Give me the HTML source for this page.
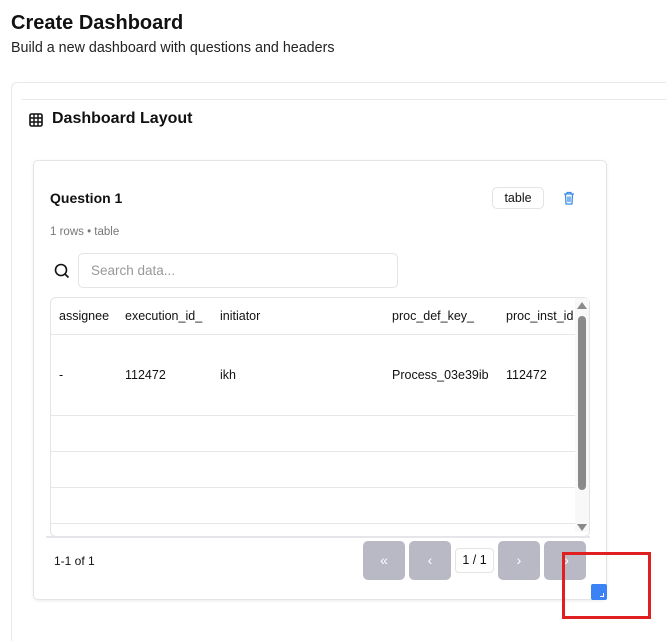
<!DOCTYPE html>
<html><head><style>
*{box-sizing:border-box;margin:0;padding:0}
html,body{width:666px;height:641px;overflow:hidden}
body{background:#fff;font-family:"Liberation Sans",sans-serif;color:#111;position:relative}
.a{position:absolute}
.th{position:absolute;top:309px;font-size:12.5px;color:#111}
.td{position:absolute;top:368px;font-size:12.5px;color:#111}
.btn{position:absolute;top:541px;width:42px;height:39px;background:#b9b9c5;border-radius:5px;color:#fff;font-size:14px;text-align:center;line-height:39px}
.rl{position:absolute;left:51px;width:524px;height:1px;background:#e6e6ea}
</style></head><body>
<div class="a" style="left:11px;top:12px;font-size:20px;font-weight:bold">Create Dashboard</div>
<div class="a" style="left:11px;top:40px;font-size:14.3px;color:#222">Build a new dashboard with questions and headers</div>
<div class="a" style="left:11px;top:82px;width:655px;height:559px;border:1px solid #e8e8ec;border-right:none;border-bottom:none;border-radius:6px 0 0 0"></div>
<div class="a" style="left:22px;top:99px;width:644px;height:1px;background:#e8e8ec"></div>
<svg class="a" style="left:29px;top:113px" width="14" height="14" viewBox="0 0 14 14"><rect x="1" y="1" width="12" height="12" rx="1.5" fill="none" stroke="#111" stroke-width="1.6"/><path d="M1 5H13M1 9H13M5 1V13M9 1V13" stroke="#111" stroke-width="1.4"/></svg>
<div class="a" style="left:52px;top:110px;font-size:16px;font-weight:bold">Dashboard Layout</div>
<div class="a" style="left:33px;top:160px;width:574px;height:440px;border:1px solid #e3e3e8;border-radius:5px;box-shadow:0 1px 3px rgba(0,0,0,.08)"></div>
<div class="a" style="left:50px;top:190px;font-size:14px;font-weight:bold">Question 1</div>
<div class="a" style="left:492px;top:187px;width:52px;height:22px;border:1px solid #e3e3e8;border-radius:5px;font-size:12.5px;text-align:center;line-height:20px">table</div>
<svg class="a" style="left:563px;top:191px" width="12" height="14" viewBox="0 0 12 14"><path d="M1 3H11M4 3V1.5H8V3M2.5 3L3 13H9L9.5 3M5 5.5V11M7 5.5V11" fill="none" stroke="#3b8ee8" stroke-width="1.3"/></svg>
<div class="a" style="left:50px;top:226px;font-size:11.5px;color:#777">1 rows • table</div>
<svg class="a" style="left:54px;top:263px" width="16" height="16" viewBox="0 0 16 16"><circle cx="7" cy="7" r="5.5" fill="none" stroke="#111" stroke-width="1.6"/><path d="M11 11L14.5 14.5" stroke="#111" stroke-width="1.6"/></svg>
<div class="a" style="left:78px;top:253px;width:320px;height:35px;border:1px solid #e3e3e8;border-radius:5px;font-size:13.5px;color:#999;padding:0 0 0 12px;line-height:33px">Search data...</div>
<div class="a" style="left:50px;top:297px;width:540px;height:240px;border:1px solid #e3e3e8;border-radius:6px;overflow:hidden"></div>
<div class="th" style="left:59px">assignee</div>
<div class="th" style="left:125px">execution_id_</div>
<div class="th" style="left:220px">initiator</div>
<div class="th" style="left:392px">proc_def_key_</div>
<div class="th" style="left:506px">proc_inst_id</div>
<div class="rl" style="top:334px"></div>
<div class="td" style="left:59px">-</div>
<div class="td" style="left:125px">112472</div>
<div class="td" style="left:220px">ikh</div>
<div class="td" style="left:392px">Process_03e39ib</div>
<div class="td" style="left:506px">112472</div>
<div class="rl" style="top:415px"></div>
<div class="rl" style="top:451px"></div>
<div class="rl" style="top:487px"></div>
<div class="rl" style="top:523px"></div>
<div class="a" style="left:575px;top:298px;width:14px;height:234px;background:#f8f8f8"></div>
<div class="a" style="left:578px;top:316px;width:8px;height:174px;background:#8a8a8a;border-radius:4px"></div>
<div class="a" style="left:577px;top:302px;width:0;height:0;border-left:5px solid transparent;border-right:5px solid transparent;border-bottom:7px solid #8a8a8a"></div>
<div class="a" style="left:577px;top:524px;width:0;height:0;border-left:5px solid transparent;border-right:5px solid transparent;border-top:7px solid #8a8a8a"></div>
<div class="a" style="left:46px;top:536px;width:544px;height:2px;background:#e6e6ea"></div>
<div class="a" style="left:54px;top:554px;font-size:12px">1-1 of 1</div>
<div class="btn" style="left:363px">«</div>
<div class="btn" style="left:409px">‹</div>
<div class="a" style="left:455px;top:548px;width:39px;height:25px;border:1px solid #e3e3e8;border-radius:4px;font-size:12.5px;text-align:center;line-height:23px">1 / 1</div>
<div class="btn" style="left:498px">›</div>
<div class="btn" style="left:544px">»</div>
<div class="a" style="left:591px;top:584px;width:16px;height:16px;background:#3b82f6;border-radius:2px"></div>
<div class="a" style="left:600px;top:593px;width:4px;height:4px;border-right:1.5px solid #fff;border-bottom:1.5px solid #fff"></div>
<div class="a" style="left:562px;top:552px;width:89px;height:67px;border:3px solid #e02020"></div>
</body></html>
